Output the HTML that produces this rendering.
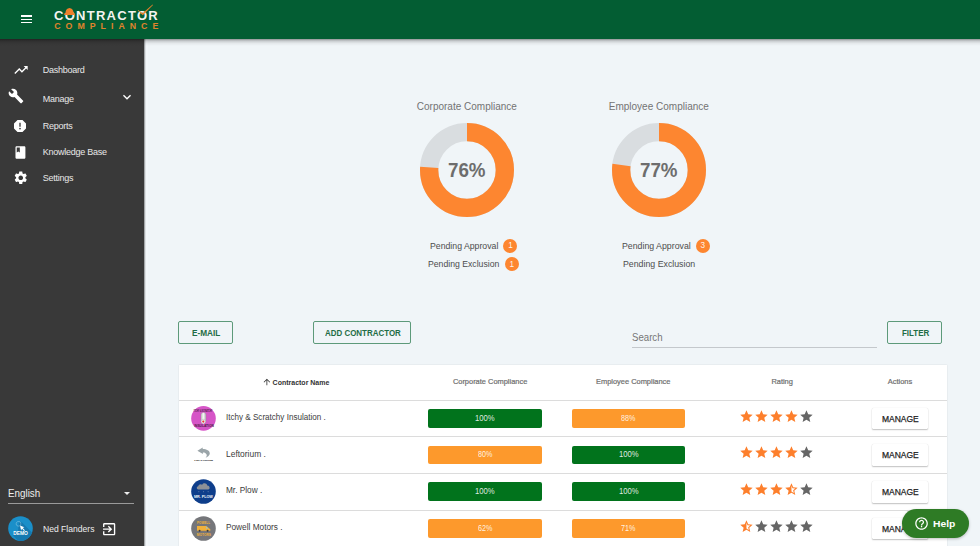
<!DOCTYPE html>
<html><head><meta charset="utf-8"><title>Contractor Compliance</title>
<style>
html,body{margin:0;padding:0;width:980px;height:546px;overflow:hidden;background:#f0f5f8}
#root{position:relative;width:980px;height:546px;overflow:hidden;font-family:"Liberation Sans", sans-serif}
.a{position:absolute}
.t{position:absolute;white-space:nowrap;font-family:"Liberation Sans", sans-serif}
</style></head><body><div id="root">
<div class="a" style="left:144.00px;top:38.80px;width:836.00px;height:507.20px;background:#f0f5f8"></div>
<div class="a" style="left:0.00px;top:38.80px;width:144.00px;height:507.20px;background:#393939"></div>
<div class="a" style="left:144.00px;top:38.80px;width:1.00px;height:507.20px;background:#a3a6a8"></div>
<div class="a" style="left:145.00px;top:38.80px;width:1.00px;height:507.20px;background:#dde1e4"></div>
<div class="a" style="left:146.00px;top:38.80px;width:2.00px;height:507.20px;background:#f3f7fa"></div>
<div class="a" style="left:0.00px;top:38.80px;width:980.00px;height:7.00px;background:linear-gradient(rgba(0,0,0,0.40),rgba(0,0,0,0.17) 28%,rgba(0,0,0,0.05) 62%,rgba(0,0,0,0))"></div>
<div class="a" style="left:0.00px;top:0.00px;width:980.00px;height:38.80px;background:#035d33"></div>
<div class="a" style="left:20.50px;top:15.40px;width:11.50px;height:1.20px;background:#ffffff"></div>
<div class="a" style="left:20.50px;top:18.70px;width:11.50px;height:1.20px;background:#ffffff"></div>
<div class="a" style="left:20.50px;top:21.80px;width:11.50px;height:1.20px;background:#ffffff"></div>
<div class="t" style="left:54.00px;top:9.40px;font-size:13px;line-height:13px;color:#f4f4f0;font-weight:700;letter-spacing:1.28px;">CONTRACTOR</div>
<div class="t" style="left:54.20px;top:21.85px;font-size:8.8px;line-height:8.8px;color:#e0832c;font-weight:700;letter-spacing:5.0px;">COMPLIANCE</div>
<svg class="a" style="left:64.2px;top:7.6px" width="11" height="7" viewBox="0 0 11 7"><path fill="#ee7f2c" d="M0.2 6.9 L0.3 5.4 L1.5 5.0 C1.5 2.4 2.6 0.9 4.0 0.5 L5.5 0.1 L7.0 0.5 C8.4 0.9 9.5 2.4 9.5 5.0 L10.7 5.4 L10.8 6.9 Z"/></svg>
<svg class="a" style="left:136px;top:2px" width="18" height="14" viewBox="0 0 18 14"><path fill="#e9802c" d="M2.2 8.0 L6.6 11.2 L16.6 2.4 L17 2.9 L6.8 13.2 L1.8 8.6 Z"/></svg>
<div class="t" style="left:42.80px;top:65.88px;font-size:9px;line-height:9px;color:#e8e8e8;font-weight:400;letter-spacing:-0.25px;">Dashboard</div>
<svg class="a" style="left:12.70px;top:62.00px;" width="16.00" height="16.00" viewBox="0 0 24 24"><path fill="#ffffff" d="M16 6l2.29 2.29-4.88 4.88-4-4L2 16.59 3.41 18l6-6 4 4 6.3-6.29L22 12V6z"/></svg>
<div class="t" style="left:42.80px;top:94.88px;font-size:9px;line-height:9px;color:#e8e8e8;font-weight:400;letter-spacing:-0.25px;">Manage</div>
<svg class="a" style="left:7.80px;top:87.90px;" width="16.00" height="16.00" viewBox="0 0 24 24"><path fill="#ffffff" d="M22.7 19l-9.1-9.1c.9-2.3.4-5-1.5-6.9-2-2-5-2.4-7.4-1.3L9 6 6 9 1.6 4.7C.4 7.1.9 10.1 2.9 12.1c1.9 1.9 4.6 2.4 6.9 1.5l9.1 9.1c.4.4 1 .4 1.4 0l2.3-2.3c.5-.4.5-1.1.1-1.4z"/></svg>
<svg class="a" style="left:119.00px;top:88.80px;" width="16.00" height="16.00" viewBox="0 0 24 24"><path fill="#ffffff" d="M16.59 8.59L12 13.17 7.41 8.59 6 10l6 6 6-6z"/></svg>
<div class="t" style="left:42.80px;top:121.68px;font-size:9px;line-height:9px;color:#e8e8e8;font-weight:400;letter-spacing:-0.25px;">Reports</div>
<svg class="a" style="left:12.00px;top:118.00px;" width="16.00" height="16.00" viewBox="0 0 24 24"><path fill="#ffffff" d="M15.73 3H8.27L3 8.27v7.46L8.27 21h7.46L21 15.73V8.27L15.73 3zM12 17.3c-.72 0-1.3-.58-1.3-1.3 0-.72.58-1.3 1.3-1.3.72 0 1.3.58 1.3 1.3 0 .72-.58 1.3-1.3 1.3zm1-4.3h-2V7h2v6z"/></svg>
<div class="t" style="left:42.80px;top:148.18px;font-size:9px;line-height:9px;color:#e8e8e8;font-weight:400;letter-spacing:-0.25px;">Knowledge Base</div>
<svg class="a" style="left:13.00px;top:144.50px;" width="14.90" height="14.90" viewBox="0 0 24 24"><path fill="#ffffff" d="M18 2H6c-1.1 0-2 .9-2 2v16c0 1.1.9 2 2 2h12c1.1 0 2-.9 2-2V4c0-1.1-.9-2-2-2zM6 4h5v8l-2.5-1.5L6 12V4z"/></svg>
<div class="t" style="left:42.80px;top:174.08px;font-size:9px;line-height:9px;color:#e8e8e8;font-weight:400;letter-spacing:-0.25px;">Settings</div>
<svg class="a" style="left:12.90px;top:169.50px;" width="15.50" height="15.50" viewBox="0 0 24 24"><path fill="#ffffff" d="M19.14 12.94c.04-.3.06-.61.06-.94 0-.32-.02-.64-.07-.94l2.03-1.58c.18-.14.23-.41.12-.61l-1.92-3.32c-.12-.22-.37-.29-.59-.22l-2.39.96c-.5-.38-1.03-.7-1.62-.94l-.36-2.54c-.04-.24-.24-.41-.48-.41h-3.84c-.24 0-.43.17-.47.41l-.36 2.54c-.59.24-1.13.57-1.62.94l-2.39-.96c-.22-.08-.47 0-.59.22L2.74 8.87c-.12.21-.08.47.12.61l2.03 1.58c-.05.3-.09.63-.09.94s.02.64.07.94l-2.03 1.58c-.18.14-.23.41-.12.61l1.92 3.32c.12.22.37.29.59.22l2.39-.96c.5.38 1.03.7 1.62.94l.36 2.54c.05.24.24.41.48.41h3.84c.24 0 .44-.17.47-.41l.36-2.54c.59-.24 1.13-.56 1.62-.94l2.39.96c.22.08.47 0 .59-.22l1.92-3.32c.12-.22.07-.47-.12-.61l-2.01-1.58zM12 15.6c-1.98 0-3.6-1.62-3.6-3.6s1.62-3.6 3.6-3.6 3.6 1.62 3.6 3.6-1.62 3.6-3.6 3.6z"/></svg>
<div class="t" style="left:7.93px;top:488.35px;font-size:10.811px;line-height:10.811px;color:#eeeeee;font-weight:400;transform:scaleX(0.9087);transform-origin:0 0;">English</div>
<div class="a" style="left:8.00px;top:502.80px;width:126.40px;height:1.00px;background:#9a9a9a"></div>
<div class="a" style="left:123.6px;top:491.8px;width:0;height:0;border-left:3.3px solid transparent;border-right:3.3px solid transparent;border-top:3.3px solid #eeeeee"></div>
<svg class="a" style="left:5px;top:513px" width="32" height="32" viewBox="0 0 32 32"><defs><clipPath id="cdemo"><circle cx="15.5" cy="15.5" r="12.3"/></clipPath></defs><circle cx="15.5" cy="15.5" r="12.3" fill="#1a8fc9"/><path clip-path="url(#cdemo)" fill="#1579b0" d="M14 9 L17 9.5 L32 24.5 L32 32 L17 32 L8.2 22.4 L8.2 19 L13 19 Z"/><circle cx="13.5" cy="10.8" r="2.3" fill="none" stroke="#cfe8f4" stroke-width="0.6" stroke-dasharray="0.7 0.45"/><path fill="#ffffff" d="M15 12.4 L19.4 14.2 L17.7 15 L19.9 17.3 L19.2 18 L17 15.7 L16.1 17.4 Z"/><text x="8.2" y="22.3" font-family="Liberation Sans" font-weight="700" font-size="4.6" textLength="14.7" lengthAdjust="spacingAndGlyphs" fill="#ffffff">DEMO</text></svg>
<div class="t" style="left:42.73px;top:525.35px;font-size:8.677px;line-height:8.677px;color:#eeeeee;font-weight:400;transform:scaleX(0.9895);transform-origin:0 0;">Ned Flanders</div>
<svg class="a" style="left:100.60px;top:521.40px;" width="16.30" height="16.30" viewBox="0 0 24 24"><path fill="#ffffff" d="M10.09 15.59L11.5 17l5-5-5-5-1.41 1.41L12.67 11H3v2h9.67l-2.58 2.59zM19 3H5c-1.11 0-2 .9-2 2v4h2V5h14v14H5v-4H3v4c0 1.1.89 2 2 2h14c1.1 0 2-.9 2-2V5c0-1.1-.9-2-2-2z"/></svg>
<svg class="a" style="left:416.80px;top:120.10px" width="100" height="100" viewBox="0 0 100 100"><circle cx="50" cy="50" r="37.850" fill="none" stroke="#d9dde0" stroke-width="18.300"/><circle cx="50" cy="50" r="37.850" fill="none" stroke="#fd8630" stroke-width="18.300" stroke-dasharray="180.742 237.819" transform="rotate(-90 50 50)"/></svg>
<div class="t" style="left:166.80px;width:600px;text-align:center;top:101.53px;font-size:10px;line-height:10px;color:#737373;font-weight:400;letter-spacing:0px;">Corporate Compliance</div>
<div class="t" style="left:447.61px;top:160.94px;font-size:19.915px;line-height:19.915px;color:#6d6d6d;font-weight:700;transform:scaleX(0.9421);transform-origin:0 0;">76%</div>
<svg class="a" style="left:608.80px;top:120.00px" width="100" height="100" viewBox="0 0 100 100"><circle cx="50" cy="50" r="37.850" fill="none" stroke="#d9dde0" stroke-width="18.300"/><circle cx="50" cy="50" r="37.850" fill="none" stroke="#fd8630" stroke-width="18.300" stroke-dasharray="183.120 237.819" transform="rotate(-90 50 50)"/></svg>
<div class="t" style="left:358.80px;width:600px;text-align:center;top:101.53px;font-size:10px;line-height:10px;color:#737373;font-weight:400;letter-spacing:0px;">Employee Compliance</div>
<div class="t" style="left:639.61px;top:160.94px;font-size:19.915px;line-height:19.915px;color:#6d6d6d;font-weight:700;transform:scaleX(0.9421);transform-origin:0 0;">77%</div>
<div class="t" style="left:429.62px;top:242.35px;font-size:8.677px;line-height:8.677px;color:#4d4d4d;font-weight:400;transform:scaleX(1.0067);transform-origin:0 0;">Pending Approval</div>
<div class="a" style="left:503.30px;top:239.10px;width:14px;height:14px;border-radius:50%;background:#fd8630"></div>
<div class="t" style="left:210.50px;width:600px;text-align:center;top:242.46px;font-size:8.2px;line-height:8.2px;color:rgba(255,255,255,0.92);font-weight:400;letter-spacing:0px;">1</div>
<div class="t" style="left:428.12px;top:259.75px;font-size:8.677px;line-height:8.677px;color:#4d4d4d;font-weight:400;transform:scaleX(1.0011);transform-origin:0 0;">Pending Exclusion</div>
<div class="a" style="left:504.60px;top:257.20px;width:14px;height:14px;border-radius:50%;background:#fd8630"></div>
<div class="t" style="left:211.80px;width:600px;text-align:center;top:260.56px;font-size:8.2px;line-height:8.2px;color:rgba(255,255,255,0.92);font-weight:400;letter-spacing:0px;">1</div>
<div class="t" style="left:621.51px;top:242.35px;font-size:8.677px;line-height:8.677px;color:#4d4d4d;font-weight:400;transform:scaleX(1.0126);transform-origin:0 0;">Pending Approval</div>
<div class="a" style="left:695.60px;top:239.10px;width:14px;height:14px;border-radius:50%;background:#fd8630"></div>
<div class="t" style="left:402.80px;width:600px;text-align:center;top:242.46px;font-size:8.2px;line-height:8.2px;color:rgba(255,255,255,0.92);font-weight:400;letter-spacing:0px;">3</div>
<div class="t" style="left:622.51px;top:259.75px;font-size:8.677px;line-height:8.677px;color:#4d4d4d;font-weight:400;transform:scaleX(1.0139);transform-origin:0 0;">Pending Exclusion</div>
<div class="a" style="left:178.20px;top:321.00px;width:55.30px;height:23.00px;border:1px solid #5d9a7a;border-radius:2px;box-sizing:border-box"></div>
<div class="t" style="left:192.18px;top:327.91px;font-size:9.673px;line-height:9.673px;color:#1f6d46;font-weight:700;transform:scaleX(0.8543);transform-origin:0 0;">E-MAIL</div>
<div class="a" style="left:313.20px;top:321.20px;width:97.60px;height:22.60px;border:1px solid #5d9a7a;border-radius:2px;box-sizing:border-box"></div>
<div class="t" style="left:325.08px;top:327.91px;font-size:9.673px;line-height:9.673px;color:#1f6d46;font-weight:700;transform:scaleX(0.8236);transform-origin:0 0;">ADD CONTRACTOR</div>
<div class="a" style="left:887.10px;top:321.40px;width:54.80px;height:22.50px;border:1px solid #5d9a7a;border-radius:2px;box-sizing:border-box"></div>
<div class="t" style="left:901.70px;top:327.91px;font-size:9.673px;line-height:9.673px;color:#1f6d46;font-weight:700;transform:scaleX(0.8255);transform-origin:0 0;">FILTER</div>
<div class="t" style="left:632.40px;top:332.91px;font-size:10.384px;line-height:10.384px;color:#767676;font-weight:400;transform:scaleX(0.9283);transform-origin:0 0;">Search</div>
<div class="a" style="left:632.20px;top:347.00px;width:244.80px;height:1.00px;background:#c4c8cc"></div>
<div class="a" style="left:178.80px;top:364.90px;width:768.40px;height:195.10px;background:#ffffff;box-shadow:0 0 1.5px rgba(0,0,0,0.12)"></div>
<svg class="a" style="left:262.30px;top:376.90px;" width="9.75" height="9.75" viewBox="0 0 24 24"><path fill="#333333" d="M4 12l1.41 1.41L11 7.83V20h2V7.83l5.58 5.59L20 12l-8-8-8 8z"/></svg>
<div class="t" style="left:272.60px;top:378.87px;font-size:7px;line-height:7px;color:#333333;font-weight:700;letter-spacing:0px;">Contractor Name</div>
<div class="t" style="left:452.90px;top:378.49px;font-size:7.45px;line-height:7.45px;color:#6e6e6e;font-weight:400;letter-spacing:0px;-webkit-text-stroke:0.2px #6e6e6e">Corporate Compliance</div>
<div class="t" style="left:596.00px;top:378.49px;font-size:7.45px;line-height:7.45px;color:#6e6e6e;font-weight:400;letter-spacing:0px;-webkit-text-stroke:0.2px #6e6e6e">Employee Compliance</div>
<div class="t" style="left:771.40px;top:378.49px;font-size:7.45px;line-height:7.45px;color:#6e6e6e;font-weight:400;letter-spacing:0px;-webkit-text-stroke:0.2px #6e6e6e">Rating</div>
<div class="t" style="left:887.80px;top:378.49px;font-size:7.45px;line-height:7.45px;color:#6e6e6e;font-weight:400;letter-spacing:0px;-webkit-text-stroke:0.2px #6e6e6e">Actions</div>
<div class="a" style="left:178.80px;top:399.80px;width:768.40px;height:1.00px;background:#dcdcdc"></div>
<svg class="a" style="left:188px;top:402.90px" width="32" height="32" viewBox="0 0 32 32"><defs><linearGradient id="thg" x1="0" x2="1"><stop offset="0" stop-color="#c9c9c9"/><stop offset="0.5" stop-color="#f4f4f4"/><stop offset="1" stop-color="#b5b5b5"/></linearGradient></defs><circle cx="15.5" cy="15.4" r="12.3" fill="#d655c7"/><text x="5.6" y="9.1" font-family="Liberation Sans" font-weight="700" font-size="2.7" textLength="18.8" lengthAdjust="spacingAndGlyphs" fill="#4a1d46">ITCHY &amp; SCRATCHY</text><text x="6.2" y="23.9" font-family="Liberation Sans" font-weight="700" font-size="2.7" textLength="19.6" lengthAdjust="spacingAndGlyphs" fill="#4a1d46">INSULATION</text><rect x="13" y="9.6" width="5" height="9.5" rx="2.2" fill="url(#thg)" stroke="#8a8a8a" stroke-width="0.3"/><circle cx="15.3" cy="18.6" r="2.3" fill="#eeeeee" stroke="#8a8a8a" stroke-width="0.3"/><circle cx="15.3" cy="18.6" r="1.1" fill="#e8392f"/></svg>
<div class="t" style="left:225.57px;top:412.90px;font-size:8.393px;line-height:8.393px;color:#3c3c3c;font-weight:400;transform:scaleX(0.9653);transform-origin:0 0;">Itchy &amp; Scratchy Insulation .</div>
<div class="a" style="left:428.00px;top:409.10px;width:114.00px;height:18.60px;background:#01731c;border-radius:2px"></div>
<div class="t" style="left:475.02px;top:413.63px;font-size:8.819px;line-height:8.819px;color:rgba(255,255,255,0.88);font-weight:400;transform:scaleX(0.8739);transform-origin:0 0;">100%</div>
<div class="a" style="left:572.00px;top:409.10px;width:113.00px;height:18.60px;background:#fd992c;border-radius:2px"></div>
<div class="t" style="left:621.27px;top:413.63px;font-size:8.819px;line-height:8.819px;color:rgba(255,255,255,0.88);font-weight:400;transform:scaleX(0.8181);transform-origin:0 0;">88%</div>
<svg class="a" style="left:739.00px;top:408.60px;" width="14.90" height="14.90" viewBox="0 0 24 24"><path fill="#fd7f2c" d="M12 17.27L18.18 21l-1.64-7.03L22 9.24l-7.19-.61L12 2 9.19 8.63 2 9.24l5.46 4.73L5.82 21z"/></svg>
<svg class="a" style="left:753.90px;top:408.60px;" width="14.90" height="14.90" viewBox="0 0 24 24"><path fill="#fd7f2c" d="M12 17.27L18.18 21l-1.64-7.03L22 9.24l-7.19-.61L12 2 9.19 8.63 2 9.24l5.46 4.73L5.82 21z"/></svg>
<svg class="a" style="left:768.80px;top:408.60px;" width="14.90" height="14.90" viewBox="0 0 24 24"><path fill="#fd7f2c" d="M12 17.27L18.18 21l-1.64-7.03L22 9.24l-7.19-.61L12 2 9.19 8.63 2 9.24l5.46 4.73L5.82 21z"/></svg>
<svg class="a" style="left:783.70px;top:408.60px;" width="14.90" height="14.90" viewBox="0 0 24 24"><path fill="#fd7f2c" d="M12 17.27L18.18 21l-1.64-7.03L22 9.24l-7.19-.61L12 2 9.19 8.63 2 9.24l5.46 4.73L5.82 21z"/></svg>
<svg class="a" style="left:798.60px;top:408.60px;" width="14.90" height="14.90" viewBox="0 0 24 24"><path fill="#666666" d="M12 17.27L18.18 21l-1.64-7.03L22 9.24l-7.19-.61L12 2 9.19 8.63 2 9.24l5.46 4.73L5.82 21z"/></svg>
<div class="a" style="left:872.2px;top:407.70px;width:56px;height:21.6px;background:#fff;border-radius:1.5px;box-shadow:0 1px 1.5px rgba(0,0,0,0.24),0 0 1px rgba(0,0,0,0.14)"></div>
<div class="t" style="left:881.94px;top:414.71px;font-size:8.962px;line-height:8.962px;color:#222222;font-weight:400;transform:scaleX(0.9480);transform-origin:0 0;-webkit-text-stroke:0.25px #222">MANAGE</div>
<div class="a" style="left:178.80px;top:436.47px;width:768.40px;height:1.00px;background:#dcdcdc"></div>
<svg class="a" style="left:188px;top:439.57px" width="32" height="32" viewBox="0 0 32 32"><path fill="#9ba5a9" d="M9.4 10.8 L14.7 7.4 L14.7 9.0 C18.5 9.0 21.8 10.5 21.8 13.6 C21.8 15.5 19.8 17 17.6 17.8 C18.8 16.6 19.0 15.6 18.6 14.6 C18 13.0 16.8 12.4 14.9 12.4 L14.9 14.0 Z"/><text x="6.2" y="20.9" font-family="Liberation Sans" font-weight="700" font-size="2.4" textLength="18.7" lengthAdjust="spacingAndGlyphs" fill="#1e1e1e">LEFTORIUM</text></svg>
<div class="t" style="left:225.54px;top:449.57px;font-size:8.393px;line-height:8.393px;color:#3c3c3c;font-weight:400;transform:scaleX(1.0070);transform-origin:0 0;">Leftorium .</div>
<div class="a" style="left:428.00px;top:445.77px;width:114.00px;height:18.60px;background:#fd992c;border-radius:2px"></div>
<div class="t" style="left:477.77px;top:450.30px;font-size:8.819px;line-height:8.819px;color:rgba(255,255,255,0.88);font-weight:400;transform:scaleX(0.8181);transform-origin:0 0;">80%</div>
<div class="a" style="left:572.00px;top:445.77px;width:113.00px;height:18.60px;background:#01731c;border-radius:2px"></div>
<div class="t" style="left:618.52px;top:450.30px;font-size:8.819px;line-height:8.819px;color:rgba(255,255,255,0.88);font-weight:400;transform:scaleX(0.8739);transform-origin:0 0;">100%</div>
<svg class="a" style="left:739.00px;top:445.27px;" width="14.90" height="14.90" viewBox="0 0 24 24"><path fill="#fd7f2c" d="M12 17.27L18.18 21l-1.64-7.03L22 9.24l-7.19-.61L12 2 9.19 8.63 2 9.24l5.46 4.73L5.82 21z"/></svg>
<svg class="a" style="left:753.90px;top:445.27px;" width="14.90" height="14.90" viewBox="0 0 24 24"><path fill="#fd7f2c" d="M12 17.27L18.18 21l-1.64-7.03L22 9.24l-7.19-.61L12 2 9.19 8.63 2 9.24l5.46 4.73L5.82 21z"/></svg>
<svg class="a" style="left:768.80px;top:445.27px;" width="14.90" height="14.90" viewBox="0 0 24 24"><path fill="#fd7f2c" d="M12 17.27L18.18 21l-1.64-7.03L22 9.24l-7.19-.61L12 2 9.19 8.63 2 9.24l5.46 4.73L5.82 21z"/></svg>
<svg class="a" style="left:783.70px;top:445.27px;" width="14.90" height="14.90" viewBox="0 0 24 24"><path fill="#fd7f2c" d="M12 17.27L18.18 21l-1.64-7.03L22 9.24l-7.19-.61L12 2 9.19 8.63 2 9.24l5.46 4.73L5.82 21z"/></svg>
<svg class="a" style="left:798.60px;top:445.27px;" width="14.90" height="14.90" viewBox="0 0 24 24"><path fill="#666666" d="M12 17.27L18.18 21l-1.64-7.03L22 9.24l-7.19-.61L12 2 9.19 8.63 2 9.24l5.46 4.73L5.82 21z"/></svg>
<div class="a" style="left:872.2px;top:444.37px;width:56px;height:21.6px;background:#fff;border-radius:1.5px;box-shadow:0 1px 1.5px rgba(0,0,0,0.24),0 0 1px rgba(0,0,0,0.14)"></div>
<div class="t" style="left:881.94px;top:451.38px;font-size:8.962px;line-height:8.962px;color:#222222;font-weight:400;transform:scaleX(0.9480);transform-origin:0 0;-webkit-text-stroke:0.25px #222">MANAGE</div>
<div class="a" style="left:178.80px;top:473.14px;width:768.40px;height:1.00px;background:#dcdcdc"></div>
<svg class="a" style="left:188px;top:476.24px" width="32" height="32" viewBox="0 0 32 32"><circle cx="15.5" cy="15.5" r="12.3" fill="#0e3e8b"/><path fill="#8d9197" d="M10.2 13.4 C8.4 13.4 8.3 10.6 10.2 10.3 C10.5 8.3 12.8 7.6 14.2 8.7 C15.2 6.8 18.7 6.8 19.3 9.5 C21.9 9.5 22.6 13.4 20.2 13.4 Z"/><circle cx="10.9" cy="15.7" r="0.45" fill="#a9b4c8"/><circle cx="15.5" cy="15.7" r="0.45" fill="#a9b4c8"/><circle cx="20.1" cy="15.7" r="0.45" fill="#a9b4c8"/><text x="5.9" y="22" font-family="Liberation Sans" font-weight="700" font-size="4" textLength="19" lengthAdjust="spacingAndGlyphs" fill="#f2f4f8">MR. PLOW</text></svg>
<div class="t" style="left:225.55px;top:486.24px;font-size:8.393px;line-height:8.393px;color:#3c3c3c;font-weight:400;transform:scaleX(0.9851);transform-origin:0 0;">Mr. Plow .</div>
<div class="a" style="left:428.00px;top:482.44px;width:114.00px;height:18.60px;background:#01731c;border-radius:2px"></div>
<div class="t" style="left:475.02px;top:486.97px;font-size:8.819px;line-height:8.819px;color:rgba(255,255,255,0.88);font-weight:400;transform:scaleX(0.8739);transform-origin:0 0;">100%</div>
<div class="a" style="left:572.00px;top:482.44px;width:113.00px;height:18.60px;background:#01731c;border-radius:2px"></div>
<div class="t" style="left:618.52px;top:486.97px;font-size:8.819px;line-height:8.819px;color:rgba(255,255,255,0.88);font-weight:400;transform:scaleX(0.8739);transform-origin:0 0;">100%</div>
<svg class="a" style="left:739.00px;top:481.94px;" width="14.90" height="14.90" viewBox="0 0 24 24"><path fill="#fd7f2c" d="M12 17.27L18.18 21l-1.64-7.03L22 9.24l-7.19-.61L12 2 9.19 8.63 2 9.24l5.46 4.73L5.82 21z"/></svg>
<svg class="a" style="left:753.90px;top:481.94px;" width="14.90" height="14.90" viewBox="0 0 24 24"><path fill="#fd7f2c" d="M12 17.27L18.18 21l-1.64-7.03L22 9.24l-7.19-.61L12 2 9.19 8.63 2 9.24l5.46 4.73L5.82 21z"/></svg>
<svg class="a" style="left:768.80px;top:481.94px;" width="14.90" height="14.90" viewBox="0 0 24 24"><path fill="#fd7f2c" d="M12 17.27L18.18 21l-1.64-7.03L22 9.24l-7.19-.61L12 2 9.19 8.63 2 9.24l5.46 4.73L5.82 21z"/></svg>
<svg class="a" style="left:783.70px;top:481.94px;" width="14.90" height="14.90" viewBox="0 0 24 24"><path fill="#fd7f2c" d="M22 9.24l-7.19-.62L12 2 9.19 8.63 2 9.24l5.46 4.73L5.82 21 12 17.27 18.18 21l-1.63-7.03L22 9.24zM12 15.4V6.1l1.71 4.04 4.38.38-3.32 2.88 1 4.28L12 15.4z"/></svg>
<svg class="a" style="left:798.60px;top:481.94px;" width="14.90" height="14.90" viewBox="0 0 24 24"><path fill="#666666" d="M12 17.27L18.18 21l-1.64-7.03L22 9.24l-7.19-.61L12 2 9.19 8.63 2 9.24l5.46 4.73L5.82 21z"/></svg>
<div class="a" style="left:872.2px;top:481.04px;width:56px;height:21.6px;background:#fff;border-radius:1.5px;box-shadow:0 1px 1.5px rgba(0,0,0,0.24),0 0 1px rgba(0,0,0,0.14)"></div>
<div class="t" style="left:881.94px;top:488.05px;font-size:8.962px;line-height:8.962px;color:#222222;font-weight:400;transform:scaleX(0.9480);transform-origin:0 0;-webkit-text-stroke:0.25px #222">MANAGE</div>
<div class="a" style="left:178.80px;top:509.81px;width:768.40px;height:1.00px;background:#dcdcdc"></div>
<svg class="a" style="left:188px;top:512.91px" width="32" height="32" viewBox="0 0 32 32"><circle cx="15.5" cy="15.5" r="12.3" fill="#75767a"/><text x="9" y="10.8" font-family="Liberation Sans" font-weight="700" font-size="4" textLength="13" lengthAdjust="spacingAndGlyphs" fill="#f0b13a">POWELL</text><path fill="#f2b13a" d="M9 12.9 H18.3 L21.4 15.4 L22.3 16.3 V17.7 H9 Z"/><path fill="#8fc4de" d="M18.1 13.6 L20.4 15.5 H18.1 Z"/><circle cx="11.6" cy="17.8" r="0.95" fill="#3a3a3a"/><circle cx="19.6" cy="17.8" r="0.95" fill="#3a3a3a"/><text x="8.8" y="23.2" font-family="Liberation Sans" font-weight="700" font-size="4" textLength="14.1" lengthAdjust="spacingAndGlyphs" fill="#f0b13a">MOTORS</text></svg>
<div class="t" style="left:225.55px;top:522.91px;font-size:8.393px;line-height:8.393px;color:#3c3c3c;font-weight:400;transform:scaleX(0.9883);transform-origin:0 0;">Powell Motors .</div>
<div class="a" style="left:428.00px;top:519.11px;width:114.00px;height:18.60px;background:#fd992c;border-radius:2px"></div>
<div class="t" style="left:477.66px;top:523.64px;font-size:8.819px;line-height:8.819px;color:rgba(255,255,255,0.88);font-weight:400;transform:scaleX(0.8247);transform-origin:0 0;">62%</div>
<div class="a" style="left:572.00px;top:519.11px;width:113.00px;height:18.60px;background:#fd992c;border-radius:2px"></div>
<div class="t" style="left:621.16px;top:523.64px;font-size:8.819px;line-height:8.819px;color:rgba(255,255,255,0.88);font-weight:400;transform:scaleX(0.8247);transform-origin:0 0;">71%</div>
<svg class="a" style="left:739.00px;top:518.61px;" width="14.90" height="14.90" viewBox="0 0 24 24"><path fill="#fd7f2c" d="M22 9.24l-7.19-.62L12 2 9.19 8.63 2 9.24l5.46 4.73L5.82 21 12 17.27 18.18 21l-1.63-7.03L22 9.24zM12 15.4V6.1l1.71 4.04 4.38.38-3.32 2.88 1 4.28L12 15.4z"/></svg>
<svg class="a" style="left:753.90px;top:518.61px;" width="14.90" height="14.90" viewBox="0 0 24 24"><path fill="#666666" d="M12 17.27L18.18 21l-1.64-7.03L22 9.24l-7.19-.61L12 2 9.19 8.63 2 9.24l5.46 4.73L5.82 21z"/></svg>
<svg class="a" style="left:768.80px;top:518.61px;" width="14.90" height="14.90" viewBox="0 0 24 24"><path fill="#666666" d="M12 17.27L18.18 21l-1.64-7.03L22 9.24l-7.19-.61L12 2 9.19 8.63 2 9.24l5.46 4.73L5.82 21z"/></svg>
<svg class="a" style="left:783.70px;top:518.61px;" width="14.90" height="14.90" viewBox="0 0 24 24"><path fill="#666666" d="M12 17.27L18.18 21l-1.64-7.03L22 9.24l-7.19-.61L12 2 9.19 8.63 2 9.24l5.46 4.73L5.82 21z"/></svg>
<svg class="a" style="left:798.60px;top:518.61px;" width="14.90" height="14.90" viewBox="0 0 24 24"><path fill="#666666" d="M12 17.27L18.18 21l-1.64-7.03L22 9.24l-7.19-.61L12 2 9.19 8.63 2 9.24l5.46 4.73L5.82 21z"/></svg>
<div class="a" style="left:872.2px;top:517.71px;width:56px;height:21.6px;background:#fff;border-radius:1.5px;box-shadow:0 1px 1.5px rgba(0,0,0,0.24),0 0 1px rgba(0,0,0,0.14)"></div>
<div class="t" style="left:881.94px;top:524.72px;font-size:8.962px;line-height:8.962px;color:#222222;font-weight:400;transform:scaleX(0.9480);transform-origin:0 0;-webkit-text-stroke:0.25px #222">MANAGE</div>
<div class="a" style="left:178.80px;top:546.48px;width:768.40px;height:1.00px;background:#dcdcdc"></div>
<div class="a" style="left:901.9px;top:509.1px;width:67.1px;height:28.7px;border-radius:14.4px;background:#2e7b25;box-shadow:0 1px 3px rgba(0,0,0,0.25)"></div>
<svg class="a" style="left:913.70px;top:515.90px;" width="15.10" height="15.10" viewBox="0 0 24 24"><path fill="#ffffff" d="M11 18h2v-2h-2v2zm1-16C6.48 2 2 6.48 2 12s4.48 10 10 10 10-4.48 10-10S17.52 2 12 2zm0 18c-4.41 0-8-3.59-8-8s3.59-8 8-8 8 3.59 8 8-3.59 8-8 8zm0-14c-2.21 0-4 1.79-4 4h2c0-1.1.9-2 2-2s2 .9 2 2c0 2-3 1.75-3 5h2c0-2.25 3-2.5 3-5 0-2.21-1.79-4-4-4z"/></svg>
<div class="t" style="left:932.95px;top:519.03px;font-size:9.531px;line-height:9.531px;color:#ffffff;font-weight:700;transform:scaleX(1.0838);transform-origin:0 0;">Help</div>
</div></body></html>
